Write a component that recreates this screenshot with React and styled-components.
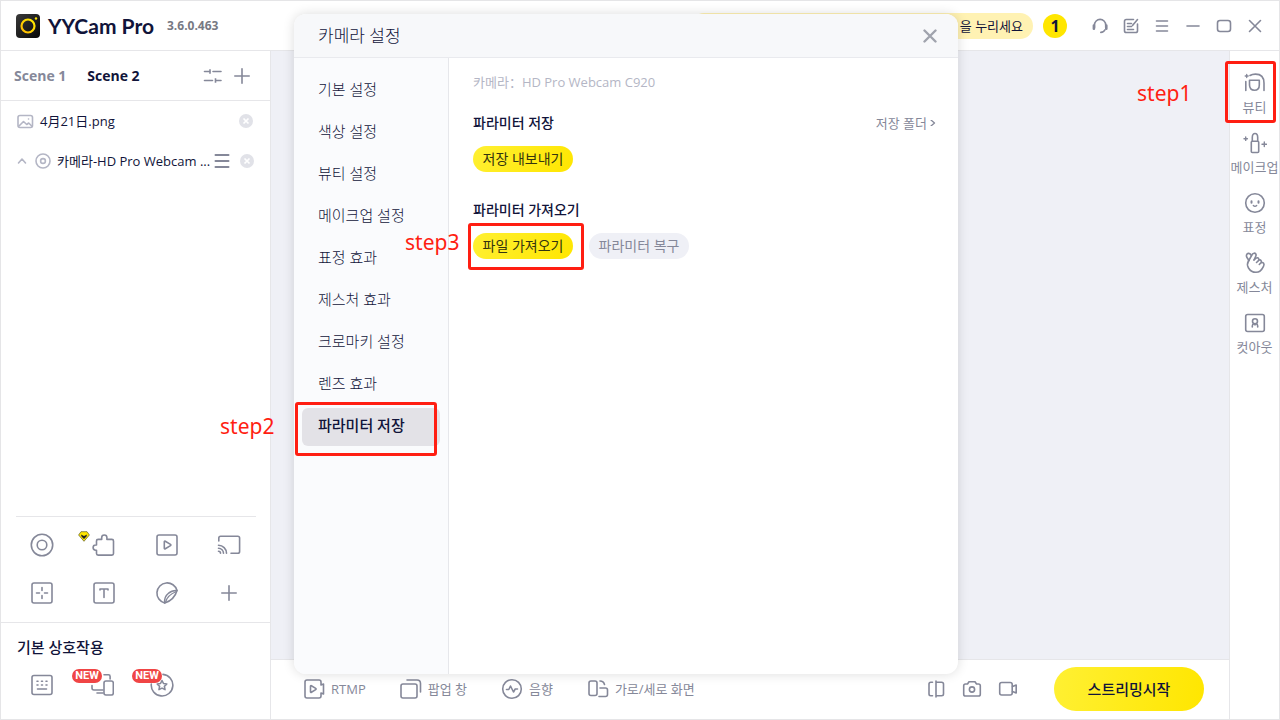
import React, { useState } from 'react';
import styled, { createGlobalStyle } from 'styled-components';

const GlobalStyle = createGlobalStyle`
  * {
    box-sizing: border-box;
  }

  body {
    margin: 0;
    background: #fff;
    color: #11143a;
    font-family: 'Open Sans', 'Noto Sans CJK SC', sans-serif;
    font-size: 13px;
    line-height: 18px;
  }

  button {
    margin: 0;
    padding: 0;
    border: none;
    background: none;
    color: inherit;
    font: inherit;
    cursor: pointer;
  }
`;

const Window = styled.div`
  position: relative;
  display: flex;
  flex-direction: column;
  min-height: 100vh;
  border: 1px solid #e5e5e7;
  background: #fff;
`;

const Header = styled.header`
  display: flex;
  align-items: center;
  height: 50px;
  padding: 0 9px 0 15px;
  border-bottom: 1px solid #e6e6e9;
`;

const Brand = styled.h1`
  width: 104px;
  margin: 0 0 0 8px;
  font-family: Lato, sans-serif;
  font-size: 21px;
  font-weight: 700;
  line-height: 24px;
  white-space: nowrap;
`;

const Version = styled.span`
  margin-left: 15px;
  color: #777983;
  font-size: 12px;
  font-weight: 700;
`;

const Notice = styled.div`
  flex: 0 1 342px;
  margin-left: auto;
  padding: 0 10px;
  border-radius: 13px;
  background: #fff2b3;
  line-height: 26px;
  text-align: right;
`;

const Counter = styled.span`
  width: 24px;
  margin: 0 17px 0 10px;
  border-radius: 12px;
  background: #ffe600;
  font-size: 16px;
  font-weight: 700;
  line-height: 24px;
  text-align: center;
`;

const IconButton = styled.button`
  display: flex;
  flex: none;
  align-items: center;
  justify-content: center;
  width: ${(props) => props.$width || 24}px;
  height: 24px;
  color: ${(props) => props.$color || '#858899'};
`;

const Main = styled.div`
  display: flex;
  flex: 1;
`;

const ScenePanel = styled.aside`
  display: flex;
  flex: none;
  flex-direction: column;
  width: 270px;
  border-right: 1px solid #e6e6e9;
`;

const SceneTabs = styled.div`
  display: flex;
  align-items: center;
  height: 50px;
  padding: 0 16px 0 13px;
  border-bottom: 1px solid #e6e6e9;
`;

const SceneTab = styled.button`
  margin-right: 21px;
  color: ${(props) => (props.$active ? '#11143a' : '#858899')};
  font-size: 14px;
  font-weight: 700;
`;

const TabActions = styled.div`
  display: flex;
  gap: 5px;
  margin-left: auto;
`;

const SourceList = styled.ul`
  flex: 1;
  margin: 0;
  padding: 0;
  list-style: none;
`;

const SourceItem = styled.li`
  display: flex;
  align-items: center;
  height: 40px;
  padding: 0 17px 0 16px;
`;

const SourceName = styled.span`
  flex: 1;
  margin-left: 6px;
  white-space: nowrap;
`;

const SourceActions = styled.div`
  display: flex;
  gap: 6px;
`;

const ToolGrid = styled.div`
  display: grid;
  grid-template-columns: repeat(4, 1fr);
  grid-auto-rows: 48px;
  place-items: center;
  padding: 4px 10px 5px;
`;

const Divider = styled.hr`
  width: 240px;
  height: 1px;
  margin: 0 0 0 15px;
  border: none;
  background: #e6e6e9;
`;

const ToolSlot = styled.div`
  position: relative;
  display: flex;
`;

const Gem = styled.svg`
  position: absolute;
  top: -2px;
  left: -14px;
`;

const Interaction = styled.section`
  padding: 14px 10px 22px;
  border-top: 1px solid #e6e6e9;
`;

const InteractionTitle = styled.h2`
  margin: 0 0 16px 6px;
  font-size: 15px;
  font-weight: 500;
  line-height: 20px;
`;

const InteractionRow = styled.div`
  display: flex;
  gap: 36px;
  padding-left: 19px;
`;

const NewTag = styled.span`
  position: absolute;
  top: -4px;
  left: -18px;
  width: 30px;
  border-radius: 7px;
  background: #f04545;
  color: #fff;
  font-family: Roboto, sans-serif;
  font-size: 11px;
  font-weight: 700;
  line-height: 14px;
  text-align: center;
`;

const Stage = styled.main`
  display: flex;
  flex: 1;
  flex-direction: column;
  min-width: 0;
  background: #eff0f6;
`;

const Footer = styled.footer`
  display: flex;
  align-items: center;
  height: 60px;
  margin-top: auto;
  padding: 0 25px 2px 31px;
  border-top: 1px solid #e6e6e9;
  background: #fff;
`;

const FooterButton = styled.button`
  display: flex;
  align-items: center;
  gap: 5px;
  margin-right: 33px;
  color: #858899;
  white-space: nowrap;
`;

const CaptureGroup = styled.div`
  display: flex;
  margin: 0 28px 0 auto;
`;

const StreamButton = styled.button`
  width: 150px;
  height: 44px;
  border-radius: 22px;
  background: linear-gradient(100deg, #fff033, #ffe600);
  font-size: 15px;
  font-weight: 500;
`;

const EffectBar = styled.nav`
  flex: none;
  width: 50px;
  padding-top: 9px;
  border-left: 1px solid #e6e6e9;
`;

const EffectButton = styled.button`
  display: flex;
  flex-direction: column;
  align-items: center;
  gap: 3px;
  width: 100%;
  height: 60px;
  padding-top: 11px;
  color: #858899;
  white-space: nowrap;
`;

const Dialog = styled.div`
  position: absolute;
  top: 13px;
  left: 293px;
  display: flex;
  flex-direction: column;
  width: 664px;
  height: 660px;
  overflow: hidden;
  border-radius: 12px;
  background: #fff;
  box-shadow: 0 0 12px rgba(0, 0, 0, 0.14);
`;

const DialogHeader = styled.div`
  display: flex;
  align-items: center;
  justify-content: space-between;
  height: 44px;
  padding: 0 16px 0 24px;
  border-bottom: 1px solid #e9eaee;
  background: #f7f8fa;
`;

const DialogTitle = styled.h2`
  margin: 0;
  font-size: 17px;
  font-weight: 300;
`;

const DialogBody = styled.div`
  display: flex;
  flex: 1;
`;

const SettingNav = styled.nav`
  display: flex;
  flex-direction: column;
  gap: 4px;
  width: 155px;
  padding: 14px 8px;
  border-right: 1px solid #e6e7eb;
  background: #fafbfd;
`;

const SettingButton = styled.button`
  height: 38px;
  padding: 0 0 4px 16px;
  border-radius: 6px;
  background: ${(props) => (props.$active ? '#e3e2e7' : 'transparent')};
  font-size: 15px;
  font-weight: ${(props) => (props.$active ? 500 : 300)};
  text-align: left;
`;

const SettingContent = styled.div`
  flex: 1;
  padding: 15px 22px 0 24px;
`;

const CameraName = styled.p`
  margin: 0 0 22px;
  color: #b4b6c5;
`;

const SectionHead = styled.div`
  display: flex;
  align-items: center;
  justify-content: space-between;
  height: 20px;
  margin-bottom: 13px;
`;

const SectionTitle = styled.h3`
  margin: 0;
  font-size: 14px;
  font-weight: 500;
`;

const FolderLink = styled.a`
  display: flex;
  align-items: center;
  gap: 3px;
  color: #858899;
  text-decoration: none;
`;

const ButtonRow = styled.div`
  display: flex;
  gap: 16px;
  margin-bottom: 28px;
`;

const PillButton = styled.button`
  width: 100px;
  height: 26px;
  border-radius: 13px;
  background: ${(props) =>
    props.$muted ? '#eff0f6' : 'linear-gradient(120deg, #fff033, #ffe600)'};
  color: ${(props) => (props.$muted ? '#858899' : '#33340f')};
  font-size: 14px;
  white-space: nowrap;
`;

// Step annotations drawn over the window
const Mark = styled.div`
  position: absolute;
  top: ${(props) => props.$top}px;
  left: ${(props) => props.$left}px;
  width: ${(props) => props.$width}px;
  height: ${(props) => props.$height}px;
  border: 3px solid #ff1e12;
  border-radius: 3px;
  pointer-events: none;
`;

const MarkLabel = styled.span`
  position: absolute;
  top: ${(props) => props.$top}px;
  left: ${(props) => props.$left}px;
  color: #ff1e12;
  font-family: 'Noto Sans', sans-serif;
  font-size: 21px;
  line-height: 28px;
`;

const Svg = styled.svg`
  flex: none;
  fill: none;
  stroke: currentColor;
  stroke-width: 1.6;
  stroke-linecap: round;
  stroke-linejoin: round;
`;

const Icon = ({ children, size = 24, ...rest }) => (
    <Svg width={size} height={size} viewBox={`0 0 ${size} ${size}`} aria-hidden="true" {...rest}>
        {children}
    </Svg>
);

const icons = {
    headset: (
        <>
            <path d="M6.5 13.5V11a5.6 5.6 0 0 1 11.2 0v2.5M17 15.8c-.8 1.8-2.2 2.6-4.2 2.6" />
            <path d="M5.9 11.5v3.2M18.3 11.5v3.2" strokeWidth="2.6" />
        </>
    ),
    note: (
        <>
            <path d="M14.5 5.5H7.3c-1 0-1.8.8-1.8 1.8v9.4c0 1 .8 1.8 1.8 1.8h9.4c1 0 1.8-.8 1.8-1.8V10M8.5 9.5h4M8.5 12.5h4M8.5 15.5h6" />
            <path d="m13.5 11.5 5-6" />
        </>
    ),
    menu: <path d="M6.5 7h11M6.5 12h11M6.5 17h11" />,
    minimize: <path d="M6 12h12" />,
    maximize: <rect x="5.5" y="6.5" width="13" height="11" rx="2.5" />,
    close: <path d="m6.5 6.5 11 11m0-11-11 11" />,
    sliders: (
        <>
            <path d="M3.5 7.500h5M12 7.500h8M3.500 16.500h8M15 16.500h5" />
            <path d="M9 5.200v4.600M14.500 14.200v4.600" strokeLinecap="butt" />
        </>
    ),
    plus: <path d="M12 4.8v14.4M4.8 12h14.4" />,
    camera: (
        <>
            <circle cx="12" cy="12" r="10.7" />
            <circle cx="12" cy="12" r="4.8" />
        </>
    ),
    puzzle: (
        <path d="M4.5 8c0-1 .6-1.6 1.6-1.6h3.6V4.6a2.6 2.6 0 0 1 5.2 0v1.8h5c1 0 1.6.6 1.6 1.6v12.5c0 1-.6 1.6-1.6 1.6H6.1c-1 0-1.6-.6-1.6-1.6v-3.3h-.8a2.5 2.5 0 0 1 0-5.2h.8z" />
    ),
    media: (
        <>
            <rect x="2" y="2" width="20" height="20" rx="2" />
            <path d="M9.3 8.800c0-.6.5-.9 1-.6l5.200 3.200c.5.3.5.9 0 1.200l-5.200 3.200c-.5.3-1 0-1-.6z" />
        </>
    ),
    cast: (
        <>
            <path d="M1.800 8V5c0-1.100.7-1.800 1.800-1.800h17.200c1.100 0 1.800.7 1.800 1.800v13.500c0 1.100-.7 1.800-1.800 1.800H14" />
            <path d="M1.500 12.300a8 8 0 0 1 8 8M1.500 15.300a5 5 0 0 1 5 5M1.500 18.300a2 2 0 0 1 2 2" />
        </>
    ),
    region: (
        <>
            <rect x="2" y="2" width="20" height="20" rx="2" />
            <path d="M12 6.500v3M12 14.500v3M6.500 12h3M14.500 12h3" />
        </>
    ),
    text: (
        <>
            <rect x="2" y="2" width="20" height="20" rx="2" />
            <path d="M8 9V8h8v1M12 8v8.500" />
        </>
    ),
    sticker: (
        <>
            <path d="M22 9.500A10.200 10.200 0 1 0 9.700 22" />
            <path d="M22 9.500C20.500 15 16 20 9.700 22c-.5-4.500 1-7.500 3.500-9.500 2.500-2.200 5.500-3.200 8.800-3" />
            <path d="M10.500 21.500c1-5 4.500-8.500 11-11" strokeWidth="1.200" />
        </>
    ),
    keyboard: (
        <>
            <rect x="2" y="2.500" width="20" height="19" rx="2" />
            <path d="M7 8.300h1M11.500 8.300h1M16 8.300h1M7 12h1M11.500 12h1M16 12h1M7.500 16h9" />
        </>
    ),
    devices: (
        <>
            <path d="M14 1.800h4.500c1 0 1.600.6 1.600 1.600V6M2 12.500V15c0 1.200.8 2 2 2h9M7 20h6" />
            <rect x="14" y="8" width="9.300" height="14" rx="2" />
        </>
    ),
    star: (
        <>
            <path d="M13 1.400A10.800 10.800 0 1 1 1.300 11" />
            <path d="m12 7.500 1.500 3 3.300.5-2.400 2.300.6 3.300-3-1.500-3 1.500.6-3.300L7.200 11l3.300-.5z" />
        </>
    ),
    rtmp: (
        <>
            <path d="M19 8V5c0-1.200-.8-2-2-2H5C3.800 3 3 3.800 3 5v14c0 1.200.8 2 2 2h12c1.200 0 2-.8 2-2v-3l2.500 1V7z" />
            <path d="M8.500 9.300c0-.5.400-.8.900-.5l4.300 2.600c.5.300.5.900 0 1.200l-4.300 2.600c-.5.300-.9 0-.9-.5z" />
        </>
    ),
    popup: (
        <>
            <rect x="2" y="7" width="16" height="14" rx="2" />
            <path d="M8 3h10c2 0 3.500 1.500 3.500 3.500V15" />
        </>
    ),
    audio: (
        <>
            <circle cx="12" cy="12" r="9.300" />
            <path d="M6.500 12.500h2.300L10.500 9l3 6 1.700-3h2.300" />
        </>
    ),
    rotate: (
        <>
            <rect x="3" y="4" width="8" height="14.500" rx="2" />
            <path d="M14 11h5.500c1.200 0 2 .8 2 2v4.500c0 1.200-.8 2-2 2H13M14 4c2.500 0 4 1.500 4.500 3.500" />
        </>
    ),
    mirror: (
        <path d="M12 4v16M8.500 5.300H6.800C5.600 5.300 5 6 5 7v10c0 1 .6 1.700 1.800 1.700h1.700M12 5.300h5.500c1.200 0 2 .7 2 1.700v10c0 1-.8 1.700-2 1.700H12" />
    ),
    photo: (
        <>
            <path d="M7.500 7 9 4.700h6L16.500 7h2c1.100 0 1.800.7 1.800 1.800v8.400c0 1.100-.7 1.800-1.800 1.800h-13c-1.100 0-1.800-.7-1.800-1.800V8.800C3.700 7.700 4.400 7 5.500 7z" />
            <circle cx="12" cy="12.500" r="2.600" />
        </>
    ),
    video: (
        <>
            <rect x="3.700" y="5.500" width="12.500" height="12.500" rx="2" />
            <path d="m16.500 9.500 3.700-1.500v8l-3.700-1.500" />
        </>
    ),
    beauty: (
        <>
            <path d="M2.800 10.500v9M7 4.500c1.500-1 3.300-1.400 5.500-1.400 5.500 0 8.500 3.200 8.500 9v7.400" />
            <path d="M6.500 9.300h9.800v4.800c0 3.200-1.800 5.200-4.900 5.200s-4.900-2-4.900-5.200z" />
            <path d="M3.700 3.500v3M2.200 5h3" strokeWidth="1.300" />
        </>
    ),
    makeup: (
        <>
            <rect x="8.300" y="10.200" width="7.400" height="11.300" rx="1" />
            <path d="M9.300 10V6.500C9.300 4 10.500 2.500 12 2.500s2.700 1.500 2.700 4V10" />
            <path d="M2.700 6v3.400M1 7.700h3.400M21.300 11v4.600M19 13.300h4.600" strokeWidth="1.400" />
        </>
    ),
    face: (
        <>
            <circle cx="12" cy="12" r="9.300" />
            <path d="M8.500 10.300v1.400M15.500 10.300v1.400" strokeWidth="2" />
            <path d="M10.300 14.500c1 1 2.400 1 3.400 0" strokeWidth="1.300" />
        </>
    ),
    gesture: (
        <>
            <path d="M6 9.500 3.800 6.200C3 4.400 3.600 2.600 5.400 2.400 7 2.200 7.800 3.200 8.300 4.400" />
            <path d="m5.500 10 3.800-6.700c.9-1.400 2.700-1.500 3.500-.3.500.9.300 1.800-.2 2.700L11 9" />
            <path d="m11 9 2-1.800c1-.8 2-.6 2.600.2s.4 1.500-.1 2.200l-2 1.900M15.600 9.300c1-.6 2-.4 2.500.4s.3 1.500-.2 2.100l-1.600 1.700M18.200 11.900c.8-.5 1.800-.4 2.400.4.6.9.5 2-.1 3-1.500 3.200-3.500 6-7.500 6-3.500 0-6-1.800-7.500-4.300C4.300 15 4 12.500 5.500 10" />
        </>
    ),
    cutout: (
        <>
            <rect x="2.700" y="3.500" width="18.600" height="17" rx="2" />
            <circle cx="12" cy="10.300" r="2.500" />
            <path d="M9.300 16v-1c0-1.200.7-2 1.700-2.300M14.700 16v-1c0-1.200-.7-2-1.700-2.300M12 13v1" />
        </>
    ),
};

const windowButtons = [
    ['headset', '고객센터'],
    ['note', '피드백'],
    ['menu', '메뉴'],
    ['minimize', '최소화'],
    ['maximize', '최대화'],
    ['close', '닫기'],
];

const tools = [
    ['camera', '카메라'],
    ['puzzle', '플러그인'],
    ['media', '미디어'],
    ['cast', '화면 전송'],
    ['region', '영역'],
    ['text', '텍스트'],
    ['sticker', '스티커'],
    ['plus', '추가'],
];

const footerItems = [
    ['rtmp', 'RTMP'],
    ['popup', '팝업 창'],
    ['audio', '음향'],
    ['rotate', '가로/세로 화면'],
];

const effects = [
    ['beauty', '뷰티'],
    ['makeup', '메이크업'],
    ['face', '표정'],
    ['gesture', '제스처'],
    ['cutout', '컷아웃'],
];

const settings = [
    '기본 설정',
    '색상 설정',
    '뷰티 설정',
    '메이크업 설정',
    '표정 효과',
    '제스처 효과',
    '크로마키 설정',
    '렌즈 효과',
    '파라미터 저장',
];

const Logo = () => (
    <svg width="24" height="24" viewBox="0 0 24 24" aria-hidden="true">
        <defs>
            <linearGradient id="logoBody" x1="0" y1="0" x2="1" y2="1">
                <stop offset="0" stopColor="#3a3a3a" />
                <stop offset="1" stopColor="#050505" />
            </linearGradient>
            <linearGradient id="logoRing" x1="1" y1="0" x2="0" y2="1">
                <stop offset="0" stopColor="#ffef00" />
                <stop offset="1" stopColor="#ffb800" />
            </linearGradient>
        </defs>
        <rect width="24" height="24" rx="4" fill="url(#logoBody)" />
        <circle cx="12" cy="12" r="6.500" fill="none" stroke="url(#logoRing)" strokeWidth="2.200" />
        <circle cx="20" cy="4.500" r="1.200" fill="#ffe600" />
    </svg>
);

const RemoveButton = () => (
    <IconButton $width={14} aria-label="삭제">
        <svg width="14" height="14" viewBox="0 0 14 14" aria-hidden="true">
            <circle cx="7" cy="7" r="7" fill="#e1e2e8" />
            <path d="m4.500 4.500 5 5m0-5-5 5" stroke="#fff" strokeWidth="1.700" />
        </svg>
    </IconButton>
);

const App = () => {
    const [scene, setScene] = useState('Scene 2');
    const [setting, setSetting] = useState('파라미터 저장');

    return (
        <>
            <GlobalStyle />
            <Window>
                <Header>
                    <Logo />
                    <Brand>YYCam Pro</Brand>
                    <Version>3.6.0.463</Version>
                    <Notice>을 누리세요</Notice>
                    <Counter>1</Counter>
                    {windowButtons.map(([name, label]) => (
                        <IconButton key={name} $width={31} aria-label={label}>
                            <Icon>{icons[name]}</Icon>
                        </IconButton>
                    ))}
                </Header>

                <Main>
                    <ScenePanel>
                        <SceneTabs>
                            {['Scene 1', 'Scene 2'].map((name) => (
                                <SceneTab
                                    key={name}
                                    $active={scene === name}
                                    onClick={() => setScene(name)}
                                >
                                    {name}
                                </SceneTab>
                            ))}
                            <TabActions>
                                <IconButton aria-label="장면 설정">
                                    <Icon>{icons.sliders}</Icon>
                                </IconButton>
                                <IconButton aria-label="장면 추가">
                                    <Icon>{icons.plus}</Icon>
                                </IconButton>
                            </TabActions>
                        </SceneTabs>

                        <SourceList>
                            <SourceItem>
                                <Icon size={17} color="#b4b6c5">
                                    <rect x="1" y="2.500" width="14.500" height="12" rx="2" />
                                    <path d="m2 13 4.500-4.500 3.200 3 2-1.500 3.500 3.500M11.500 6h.1" />
                                </Icon>
                                <SourceName>4月21日.png</SourceName>
                                <RemoveButton />
                            </SourceItem>
                            <SourceItem>
                                <IconButton $width={10} $color="#b4b6c5" aria-label="접기">
                                    <Icon size={10}>
                                        <path d="m1.500 7 3.500-4 3.500 4" />
                                    </Icon>
                                </IconButton>
                                <Icon size={24} color="#b4b6c5">
                                    <circle cx="16" cy="12" r="7" />
                                    <circle cx="16" cy="12" r="2.400" />
                                </Icon>
                                <SourceName>카메라-HD Pro Webcam ...</SourceName>
                                <SourceActions>
                                    <IconButton aria-label="소스 메뉴">
                                        <Icon size={16}>
                                            <path d="M1.500 2h13M1.500 8h13M1.500 14h13" strokeWidth="2" />
                                        </Icon>
                                    </IconButton>
                                    <RemoveButton />
                                </SourceActions>
                            </SourceItem>
                        </SourceList>

                        <Divider />
                        <ToolGrid>
                            {tools.map(([name, label]) => (
                                <ToolSlot key={name}>
                                    <IconButton aria-label={label}>
                                        <Icon>{icons[name]}</Icon>
                                    </IconButton>
                                    {name === 'puzzle' && (
                                        <Gem width="12" height="11" viewBox="0 0 12 11">
                                            <path
                                                d="M3 .7h6L11.400 4 6 10.300.6 4z"
                                                fill="#ffe600"
                                                stroke="#5c5a20"
                                                strokeWidth=".7"
                                            />
                                            <path d="M3 3.500 6 5l3-1.500-.5 2L6 8 3.500 5.500z" fill="#222" />
                                        </Gem>
                                    )}
                                </ToolSlot>
                            ))}
                        </ToolGrid>

                        <Interaction>
                            <InteractionTitle>기본 상호작용</InteractionTitle>
                            <InteractionRow>
                                <ToolSlot>
                                    <IconButton aria-label="키보드">
                                        <Icon>{icons.keyboard}</Icon>
                                    </IconButton>
                                </ToolSlot>
                                <ToolSlot>
                                    <IconButton aria-label="기기 연결">
                                        <Icon>{icons.devices}</Icon>
                                    </IconButton>
                                    <NewTag>NEW</NewTag>
                                </ToolSlot>
                                <ToolSlot>
                                    <IconButton aria-label="즐겨찾기">
                                        <Icon>{icons.star}</Icon>
                                    </IconButton>
                                    <NewTag>NEW</NewTag>
                                </ToolSlot>
                            </InteractionRow>
                        </Interaction>
                    </ScenePanel>

                    <Stage>
                        <Footer>
                            {footerItems.map(([name, label]) => (
                                <FooterButton key={name}>
                                    <Icon>{icons[name]}</Icon>
                                    {label}
                                </FooterButton>
                            ))}
                            <CaptureGroup>
                                <IconButton $width={36} aria-label="좌우 반전">
                                    <Icon>{icons.mirror}</Icon>
                                </IconButton>
                                <IconButton $width={36} aria-label="사진">
                                    <Icon>{icons.photo}</Icon>
                                </IconButton>
                                <IconButton $width={36} aria-label="녹화">
                                    <Icon>{icons.video}</Icon>
                                </IconButton>
                            </CaptureGroup>
                            <StreamButton>스트리밍시작</StreamButton>
                        </Footer>
                    </Stage>

                    <EffectBar>
                        {effects.map(([name, label]) => (
                            <EffectButton key={name}>
                                <Icon>{icons[name]}</Icon>
                                {label}
                            </EffectButton>
                        ))}
                    </EffectBar>
                </Main>

                <Dialog role="dialog" aria-label="카메라 설정">
                    <DialogHeader>
                        <DialogTitle>카메라 설정</DialogTitle>
                        <IconButton $color="#a0a3ad" aria-label="닫기">
                            <Icon size={14}>
                                <path d="m1.500 1.500 11 11m0-11-11 11" strokeWidth="2.400" />
                            </Icon>
                        </IconButton>
                    </DialogHeader>
                    <DialogBody>
                        <SettingNav>
                            {settings.map((name) => (
                                <SettingButton
                                    key={name}
                                    $active={setting === name}
                                    onClick={() => setSetting(name)}
                                >
                                    {name}
                                </SettingButton>
                            ))}
                        </SettingNav>
                        <SettingContent>
                            <CameraName>카메라：HD Pro Webcam C920</CameraName>
                            <SectionHead>
                                <SectionTitle>파라미터 저장</SectionTitle>
                                <FolderLink href="#folder">
                                    저장 폴더
                                    <Icon size={6}>
                                        <path d="M1 0 4.500 3 1 6" strokeWidth="1.300" />
                                    </Icon>
                                </FolderLink>
                            </SectionHead>
                            <ButtonRow>
                                <PillButton>저장 내보내기</PillButton>
                            </ButtonRow>
                            <SectionHead>
                                <SectionTitle>파라미터 가져오기</SectionTitle>
                            </SectionHead>
                            <ButtonRow>
                                <PillButton>파일 가져오기</PillButton>
                                <PillButton $muted>파라미터 복구</PillButton>
                            </ButtonRow>
                        </SettingContent>
                    </DialogBody>
                </Dialog>

                <Mark $top={60} $left={1224} $width={51} $height={62} />
                <MarkLabel $top={78} $left={1136}>step1</MarkLabel>
                <Mark $top={401} $left={294} $width={142} $height={54} />
                <MarkLabel $top={411} $left={219}>step2</MarkLabel>
                <Mark $top={222} $left={467} $width={116} $height={47} />
                <MarkLabel $top={227} $left={404}>step3</MarkLabel>
            </Window>
        </>
    );
};

export default App;
